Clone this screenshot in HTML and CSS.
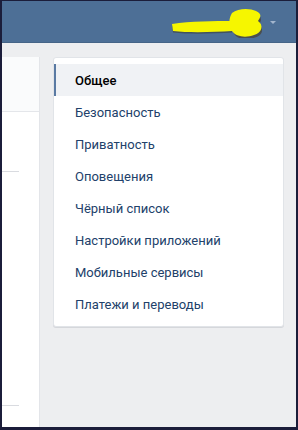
FILE: index.html
```html
<!DOCTYPE html>
<html lang="ru">
<head>
<meta charset="utf-8">
<link rel="stylesheet" href="styles.css">
</head>
<body>
<div class="frame">
  <header class="topbar">
    <svg class="scribble" width="94" height="30" viewBox="0 0 94 30">
      <path d="M2,16 C20,13 45,13 62,13 L62,23 C45,24 20,25 3,23 Z" fill="#3a3a30" opacity="0.55" transform="translate(0,1.5)"/>
      <path d="M64,8 C68,3 80,2 86,5 C92,8 90,12 88,15 C93,19 92,26 84,28 C76,31 66,30 63,24 C60,18 61,12 64,8 Z" fill="#4a3a20" opacity="0.6" transform="translate(1,1.5)"/>
      <path d="M2,16 C20,13 45,13 62,13 L62,23 C45,24 20,25 3,23 Z" fill="#f6f600"/>
      <path d="M62,5 C68,0 80,0 86,3 C93,6 90,10 88,13 C94,17 92,25 84,27 C76,30 66,29 62,23 C58,17 59,10 62,5 Z" fill="#f6f600"/>
    </svg>
    <span class="caret"></span>
  </header>
  <main class="page">
    <aside class="side">
      <div class="side-top"></div>
      <div class="side-rule first"></div>
      <div class="side-fill"></div>
      <div class="side-rule"></div>
    </aside>
    <nav class="menu">
      <a class="item active">Общее</a>
      <a class="item">Безопасность</a>
      <a class="item">Приватность</a>
      <a class="item">Оповещения</a>
      <a class="item">Чёрный список</a>
      <a class="item">Настройки приложений</a>
      <a class="item">Мобильные сервисы</a>
      <a class="item">Платежи и переводы</a>
    </nav>
  </main>
</div>
</body>
</html>
```

FILE: styles.css
```css
* { box-sizing: border-box; }
html, body {
  margin: 0;
  padding: 0;
  width: 298px;
  height: 430px;
  overflow: hidden;
  background: #1b1d3a;
}
.frame {
  width: 298px;
  height: 430px;
  border-style: solid;
  border-color: #1b1d3a;
  border-width: 1px 2px 3px 2px;
  background: #edeef0;
  display: flex;
  flex-direction: column;
  font-family: Roboto, "Open Sans", "DejaVu Sans", sans-serif;
}
.topbar {
  height: 42px;
  flex: none;
  background: #4d6f96;
  border-bottom: 1px solid #456487;
  display: flex;
  align-items: center;
  justify-content: flex-end;
  padding-right: 20px;
}
.scribble {
  display: block;
  margin-top: 3px;
  margin-right: 6px;
}
.caret {
  width: 0;
  height: 0;
  border-left: 3.5px solid transparent;
  border-right: 3.5px solid transparent;
  border-top: 3px solid #a3b6cd;
  margin-top: 1px;
}
.page {
  flex: 1;
  display: flex;
  align-items: flex-start;
  padding-top: 14px;
  gap: 14px;
  min-height: 0;
}
.side {
  width: 38px;
  align-self: stretch;
  background: #fff;
  border-right: 1px solid #e3e5e9;
  display: flex;
  flex-direction: column;
}
.side-top {
  height: 55px;
  background: #fafbfc;
  border-bottom: 1px solid #e4e6ea;
}
.side-rule {
  width: 17px;
  height: 1px;
  background: #d9dbe0;
}
.side-rule.first { margin-top: 59px; }
.side-fill { flex: 1; }
.side-rule:last-child { margin-bottom: 21px; }
.menu {
  width: 231px;
  margin-left: -1px;
  background: #fff;
  border: 1px solid #e1e4e8;
  border-radius: 3px;
  box-shadow: 0 1px 0 0 #d5d7db;
  padding: 6px 0 6px;
  display: flex;
  flex-direction: column;
}
.item {
  height: 32px;
  display: flex;
  align-items: center;
  padding-left: 19px;
  font-size: 13px;
  color: #22416a;
  border-left: 2px solid transparent;
}
.item.active {
  background: #f0f2f5;
  border-left-color: #5a7aa3;
  color: #000;
  font-weight: 500;
}
```
